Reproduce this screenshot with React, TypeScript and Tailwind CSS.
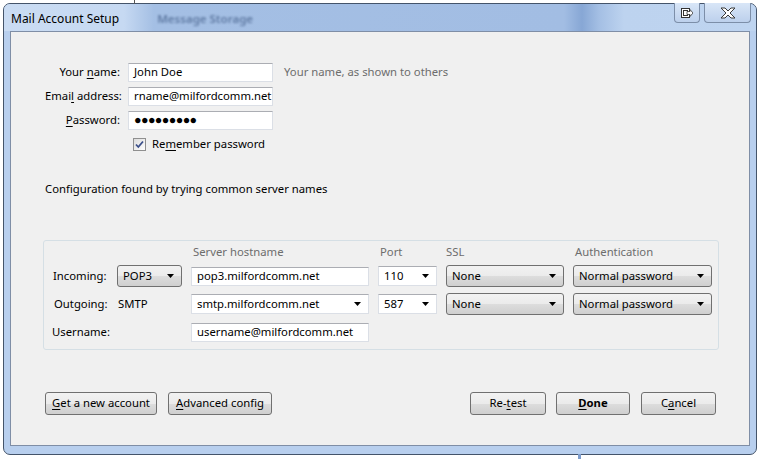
import React from 'react';

const font = "font-['Segoe_UI','Noto_Sans',sans-serif]";

function Mn({ children }: { children: React.ReactNode }) {
  return <span className="underline underline-offset-2 decoration-[1px]">{children}</span>;
}

function Arrow() {
  return (
    <svg width="7" height="4" viewBox="0 0 7 4" className="shrink-0">
      <path d="M0 0h7L3.5 4z" fill="#000" />
    </svg>
  );
}

function TextBox({ value, className = '' }: { value: string; className?: string }) {
  return (
    <div
      className={`h-[19px] flex items-center px-[5px] bg-white border border-[#dbdfe6] border-t-[#abadb3] text-black whitespace-nowrap overflow-hidden ${className}`}
    >
      {value}
    </div>
  );
}

function EditCombo({ value }: { value: string }) {
  return (
    <div className="h-[20px] flex items-center justify-between pl-[5px] pr-[7px] bg-white border border-[#dbdfe6] border-t-[#abadb3] whitespace-nowrap">
      <span>{value}</span>
      <Arrow />
    </div>
  );
}

function DropButton({ value }: { value: string }) {
  return (
    <div className="h-[22px] flex items-center justify-between pl-[5px] pr-[7px] rounded-[3px] border border-[#707070] bg-[linear-gradient(#f2f2f2_0%,#ebebeb_50%,#dddddd_51%,#cfcfcf_100%)] whitespace-nowrap">
      <span>{value}</span>
      <Arrow />
    </div>
  );
}

function Btn({ children, w, bold = false }: { children: React.ReactNode; w: string; bold?: boolean }) {
  return (
    <div
      className={`${w} h-[23px] flex items-center justify-center rounded-[3px] border border-[#707070] bg-[linear-gradient(#f2f2f2_0%,#ebebeb_50%,#dddddd_51%,#cfcfcf_100%)] whitespace-nowrap ${bold ? 'font-bold' : ''}`}
    >
      {children}
    </div>
  );
}

export default function App() {
  return (
    <div className={`relative w-[766px] h-[459px] overflow-hidden bg-white ${font} text-[11.3px] text-black`}>
      {/* window behind */}
      <div className="absolute left-[134px] top-0 w-[1px] h-[4px] bg-[#555]" />
      <div className="absolute left-[578px] bottom-0 w-[3px] h-[5px] bg-[#7d9ccc]" />

      <div className="ml-[3px] mt-[3px] w-[754px] h-[452px] flex flex-col rounded-[7px] border border-[#44546a] bg-[#b8cfee] px-[6px] pb-[8px]">
        {/* title bar */}
        <div className="relative h-[27px] -mx-[6px] px-[7px] flex items-center rounded-t-[6px] bg-[linear-gradient(to_right,#cadcf3_0px,#c6d9f2_120px,#a4bfe4_150px,#a2bde3_560px,#87a7d5_578px,#a4bfe4_595px,#bdd3ef_620px,#bed4f0_100%)]">
          <span className="text-[12px] text-black pt-[2px]">Mail Account Setup</span>
          <span className="ml-[38px] pt-[2px] text-[11.5px] font-semibold text-[#5f7aa3] blur-[1.3px]">Message Storage</span>
          <div className="absolute right-[5px] top-[-1px] flex gap-[4px]">
            <div className="w-[26px] h-[20px] rounded-b-[4px] border border-t-0 border-[#7c8ea8] bg-[linear-gradient(#d9e6f7,#bcd0ec)] flex items-center justify-center">
              <svg width="12" height="10" viewBox="0 0 12 10">
                <rect x="0.5" y="0.5" width="8" height="9" fill="#fff" stroke="#333" />
                <rect x="2.5" y="2.5" width="4" height="5" fill="none" stroke="#333" />
                <path d="M6 3.5h3V1.5l3 3.5-3 3.5v-2H6z" fill="#fff" stroke="#333" strokeWidth="0.8" />
              </svg>
            </div>
            <div className="w-[47px] h-[20px] rounded-b-[4px] border border-t-0 border-[#7c8ea8] bg-[linear-gradient(#d9e6f7,#bcd0ec)] flex items-center justify-center">
              <svg width="16" height="12" viewBox="0 0 16 12">
                <path
                  d="M1 1h4l3 3 3-3h4l-5 5 5 5h-4l-3-3-3 3H1l5-5z"
                  fill="#fff"
                  stroke="#3a3a3a"
                  strokeWidth="1"
                  strokeLinejoin="round"
                />
              </svg>
            </div>
          </div>
        </div>

        {/* client area */}
        <div className="flex-1 flex flex-col border border-[#7f8ea6] bg-[#f0f0f0] pl-[34px] pr-[33px] pt-[30px]">
          <div className="grid grid-cols-[75px_145px_auto] gap-x-[8px] gap-y-[4px] items-center">
            <div className="text-right h-[20px] leading-[20px] whitespace-nowrap">
              Your <Mn>n</Mn>ame:
            </div>
            <TextBox value="John Doe" />
            <div className="ml-[3px] text-[#6d6d6d] whitespace-nowrap">Your name, as shown to others</div>

            <div className="text-right h-[20px] leading-[20px] whitespace-nowrap">
              Emai<Mn>l</Mn> address:
            </div>
            <TextBox value="rname@milfordcomm.net" />
            <div />

            <div className="text-right h-[20px] leading-[20px] whitespace-nowrap">
              <Mn>P</Mn>assword:
            </div>
            <TextBox value="●●●●●●●●●" className="text-[12.5px] tracking-[-0.6px]" />
            <div />

            <div className="h-[20px]" />
            <div className="flex items-center gap-[6px] ml-[5px] h-[20px] whitespace-nowrap">
              <div className="w-[13px] h-[13px] border border-[#8f8f8f] bg-[linear-gradient(135deg,#dcdcdc,#fefefe)] flex items-center justify-center">
                <svg width="9" height="9" viewBox="0 0 9 9">
                  <path d="M1 4.5l2.3 2.5L8 1.5" fill="none" stroke="#3b4f8a" strokeWidth="1.8" />
                </svg>
              </div>
              <span>
                Re<Mn>m</Mn>ember password
              </span>
            </div>
            <div />
          </div>

          <div className="mt-[27px] leading-[16px]">Configuration found by trying common server names</div>

          <div className="mt-[43px] w-[676px] -ml-[2px] rounded-[3px] border border-[#d5dfe5] pl-[9px] pt-[4px] pb-[6px]">
            <div className="grid grid-cols-[55px_65px_178px_59px_118px_139px] gap-x-[9px] gap-y-[6px] items-center">
              <div className="h-[14px]" />
              <div />
              <div className="h-[14px] leading-[14px] pl-[2px] text-[#6d6d6d]">Server hostname</div>
              <div className="h-[14px] leading-[14px] pl-[2px] text-[#6d6d6d]">Port</div>
              <div className="h-[14px] leading-[14px] text-[#6d6d6d]">SSL</div>
              <div className="h-[14px] leading-[14px] pl-[2px] text-[#6d6d6d]">Authentication</div>

              <div className="h-[22px] leading-[22px] whitespace-nowrap">Incoming:</div>
              <DropButton value="POP3" />
              <TextBox value="pop3.milfordcomm.net" />
              <EditCombo value="110" />
              <DropButton value="None" />
              <DropButton value="Normal password" />

              <div className="h-[22px] leading-[22px] pl-[1px] whitespace-nowrap">Outgoing:</div>
              <div className="pl-[1px]">SMTP</div>
              <EditCombo value="smtp.milfordcomm.net" />
              <EditCombo value="587" />
              <DropButton value="None" />
              <DropButton value="Normal password" />

              <div className="h-[22px] leading-[22px] -ml-[1px] whitespace-nowrap">Username:</div>
              <div />
              <TextBox value="username@milfordcomm.net" />
              <div />
              <div />
              <div />
            </div>
          </div>

          <div className="mt-[42px] flex items-center">
            <Btn w="w-[112px]">
              <span>
                <Mn>G</Mn>et a new account
              </span>
            </Btn>
            <div className="w-[11px]" />
            <Btn w="w-[104px]">
              <span>
                <Mn>A</Mn>dvanced config
              </span>
            </Btn>
            <div className="flex-1" />
            <Btn w="w-[76px]">
              <span>
                Re-<Mn>t</Mn>est
              </span>
            </Btn>
            <div className="w-[10px]" />
            <Btn w="w-[74px]" bold>
              <span>
                <Mn>D</Mn>one
              </span>
            </Btn>
            <div className="w-[11px]" />
            <Btn w="w-[75px]">
              <span>
                C<Mn>a</Mn>ncel
              </span>
            </Btn>
          </div>
        </div>
      </div>
    </div>
  );
}
